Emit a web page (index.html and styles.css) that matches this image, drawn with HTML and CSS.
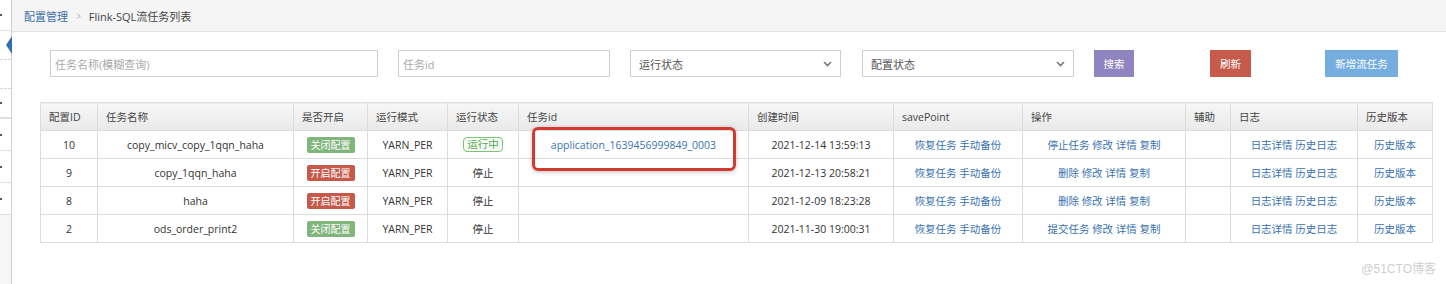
FILE: index.html
```html
<!DOCTYPE html>
<html lang="zh">
<head>
<meta charset="utf-8">
<title>Flink-SQL流任务列表</title>
<link rel="stylesheet" href="styles.css">
</head>
<body>
<div class="app">
  <aside class="sidebar">
    <div class="nav-item nav-top"><span class="mark"></span></div>
    <div class="nav-item nav-toggle"><span class="toggle"></span></div>
    <div class="nav-item nav-dashed"></div>
    <div class="nav-item nav-sub"><span class="mark"></span></div>
    <div class="nav-item nav-sub"><span class="mark"></span></div>
    <div class="nav-item nav-sub"><span class="mark"></span></div>
    <div class="nav-item nav-sub"><span class="mark"></span></div>
    <div class="nav-rest"></div>
  </aside>
  <main class="main">
    <div class="breadcrumb">
      <a class="crumb-link">配置管理</a>
      <span class="crumb-sep">&gt;</span>
      <span class="crumb-cur">Flink-SQL流任务列表</span>
    </div>
    <div class="content">
      <div class="filters">
        <div class="field w-name"><span class="ph">任务名称(模糊查询)</span></div>
        <div class="field w-id"><span class="ph">任务id</span></div>
        <div class="field select w-run"><span>运行状态</span><svg width="9" height="6" viewBox="0 0 9 6"><path d="M1 1l3.5 3.5L8 1" fill="none" stroke="#777" stroke-width="1.6"/></svg></div>
        <div class="field select w-cfg"><span>配置状态</span><svg width="9" height="6" viewBox="0 0 9 6"><path d="M1 1l3.5 3.5L8 1" fill="none" stroke="#777" stroke-width="1.6"/></svg></div>
        <button class="btn btn-search">搜索</button>
        <button class="btn btn-refresh">刷新</button>
        <button class="btn btn-new">新增流任务</button>
      </div>
      <div class="table-wrap">
        <table class="grid">
          <colgroup>
            <col style="width:57px"><col style="width:196px"><col style="width:74px"><col style="width:80px">
            <col style="width:71px"><col style="width:230px"><col style="width:145px"><col style="width:129px">
            <col style="width:163px"><col style="width:45px"><col style="width:127px"><col style="width:75px">
          </colgroup>
          <thead>
            <tr>
              <th>配置ID</th><th>任务名称</th><th>是否开启</th><th>运行模式</th><th>运行状态</th><th>任务id</th>
              <th>创建时间</th><th>savePoint</th><th>操作</th><th>辅助</th><th>日志</th><th>历史版本</th>
            </tr>
          </thead>
          <tbody>
            <tr>
              <td>10</td><td>copy_micv_copy_1qqn_haha</td>
              <td><span class="badge badge-off">关闭配置</span></td>
              <td>YARN_PER</td>
              <td><span class="status-run">运行中</span></td>
              <td><a class="lnk">application_1639456999849_0003</a></td>
              <td>2021-12-14 13:59:13</td>
              <td><a class="lnk">恢复任务</a> <a class="lnk">手动备份</a></td>
              <td><a class="lnk">停止任务</a> <a class="lnk">修改</a> <a class="lnk">详情</a> <a class="lnk">复制</a></td>
              <td></td>
              <td><a class="lnk">日志详情</a> <a class="lnk">历史日志</a></td>
              <td><a class="lnk">历史版本</a></td>
            </tr>
            <tr>
              <td>9</td><td>copy_1qqn_haha</td>
              <td><span class="badge badge-on">开启配置</span></td>
              <td>YARN_PER</td><td>停止</td><td></td>
              <td>2021-12-13 20:58:21</td>
              <td><a class="lnk">恢复任务</a> <a class="lnk">手动备份</a></td>
              <td><a class="lnk">删除</a> <a class="lnk">修改</a> <a class="lnk">详情</a> <a class="lnk">复制</a></td>
              <td></td>
              <td><a class="lnk">日志详情</a> <a class="lnk">历史日志</a></td>
              <td><a class="lnk">历史版本</a></td>
            </tr>
            <tr>
              <td>8</td><td>haha</td>
              <td><span class="badge badge-on">开启配置</span></td>
              <td>YARN_PER</td><td>停止</td><td></td>
              <td>2021-12-09 18:23:28</td>
              <td><a class="lnk">恢复任务</a> <a class="lnk">手动备份</a></td>
              <td><a class="lnk">删除</a> <a class="lnk">修改</a> <a class="lnk">详情</a> <a class="lnk">复制</a></td>
              <td></td>
              <td><a class="lnk">日志详情</a> <a class="lnk">历史日志</a></td>
              <td><a class="lnk">历史版本</a></td>
            </tr>
            <tr>
              <td>2</td><td>ods_order_print2</td>
              <td><span class="badge badge-off">关闭配置</span></td>
              <td>YARN_PER</td><td>停止</td><td></td>
              <td>2021-11-30 19:00:31</td>
              <td><a class="lnk">恢复任务</a> <a class="lnk">手动备份</a></td>
              <td><a class="lnk">提交任务</a> <a class="lnk">修改</a> <a class="lnk">详情</a> <a class="lnk">复制</a></td>
              <td></td>
              <td><a class="lnk">日志详情</a> <a class="lnk">历史日志</a></td>
              <td><a class="lnk">历史版本</a></td>
            </tr>
          </tbody>
        </table>
        <div class="annotation"></div>
      </div>
    </div>
    <div class="watermark">@51CTO博客</div>
  </main>
</div>
</body>
</html>
```

FILE: styles.css
```css
* { box-sizing: border-box; }
html, body { margin: 0; padding: 0; background: #fff; }
body {
  font-family: "Open Sans", "Noto Sans CJK SC", sans-serif;
  font-size: 10.5px;
  color: #333;
  width: 1446px;
  height: 284px;
  overflow: hidden;
}
.app { display: flex; height: 284px; }

/* sidebar */
.sidebar {
  width: 12px;
  flex: none;
  border-right: 1px solid #cfcfcf;
  display: flex;
  flex-direction: column;
  background: #fff;
}
.nav-item { position: relative; flex: none; }
.nav-top { height: 31px; border-bottom: 1px solid #e2e2e2; }
.nav-toggle { height: 29px; border-bottom: 1px dashed #d8d8d8; }
.nav-dashed { height: 29px; border-bottom: 1px dashed #d8d8d8; }
.nav-sub { height: 32px; border-top: 1px solid #e0e0e0; }
.nav-dashed + .nav-sub { height: 29px; border-top: none; border-bottom: 1px solid #e0e0e0; }
.nav-rest { flex: 1; background: #f6f6f6; border-top: 1px solid #e0e0e0; }
.mark {
  position: absolute; left: 0; top: 50%;
  width: 2px; height: 2px; margin-top: -1px; background: #555;
}
.toggle {
  position: absolute; right: -1px; top: 5px;
  width: 0; height: 0;
  border-top: 9px solid transparent;
  border-bottom: 9px solid transparent;
  border-right: 6px solid #2f6fb0;
}

/* main */
.main { flex: 1; display: flex; flex-direction: column; position: relative; }
.breadcrumb {
  height: 32px;
  background: #f5f5f5;
  border-bottom: 1px solid #e2e2e2;
  display: flex;
  align-items: center;
  padding-left: 12px;
  font-size: 11px;
}
.crumb-link { color: #3b6fa8; }
.crumb-sep { color: #aaa; margin: 0 7px 0 8px; font-size: 10px; transform: scaleX(0.7); }
.crumb-cur { color: #444; }

.content { padding: 18px 0 0 28px; }
.filters { display: flex; margin-left: 10px; height: 27px; }
.field {
  height: 27px;
  border: 1px solid #cfcfcf;
  background: #fff;
  display: flex;
  align-items: center;
  padding: 0 4px;
  font-size: 11px;
  color: #555;
  margin-right: 20px;
}
.ph { color: #aaa; }
.w-name { width: 328px; }
.w-id { width: 212px; }
.w-run { width: 211px; margin-right: 21px; }
.w-cfg { width: 212px; }
.select { justify-content: space-between; padding: 0 8px 0 8px; }
.btn {
  height: 27px;
  border: none;
  color: #fff;
  font-family: inherit;
  font-size: 10.5px;
  padding: 0;
  flex: none;
}
.btn-search { width: 40px; background: #8f84bf; margin-right: 76px; }
.btn-refresh { width: 41px; background: #c65b4b; margin-right: 74px; }
.btn-new { width: 73px; background: #76ade0; }

.table-wrap { position: relative; margin-top: 25px; width: 1392px; }
.grid {
  width: 1392px;
  border-collapse: collapse;
  table-layout: fixed;
}
.grid th, .grid td {
  border: 1px solid #dcdcdc;
  height: 28px;
  padding: 0 8px;
  white-space: nowrap;
  overflow: hidden;
}
.grid th {
  text-align: left;
  font-weight: normal;
  color: #444;
  background: linear-gradient(#f7f7f7, #e9e9e9);
}
.grid td { text-align: center; color: #333; }
.lnk { color: #3a72b0; }
.badge {
  display: inline-block;
  color: #fff;
  padding: 1px 4px;
  line-height: 14px;
  border-radius: 2px;
  font-size: 10px;
}
.badge-off { background: #80b57c; }
.badge-on { background: #c65a4a; }
.status-run {
  display: inline-block;
  color: #55a84f;
  border: 1px solid #7cc477;
  border-radius: 4px;
  padding: 0 3px;
  line-height: 13px;
  background: #f7fdf6;
}

.annotation {
  position: absolute;
  left: 492px;
  top: 25px;
  width: 204px;
  height: 44px;
  border: 3px solid #d33a2f;
  border-radius: 6px;
  box-shadow: 0 1px 4px rgba(0,0,0,0.25);
}
.watermark {
  position: absolute;
  right: 10px;
  bottom: 8px;
  color: #cfcfcf;
  font-size: 12px;
  font-family: "Liberation Sans", "Noto Sans CJK SC", sans-serif;
}
```
